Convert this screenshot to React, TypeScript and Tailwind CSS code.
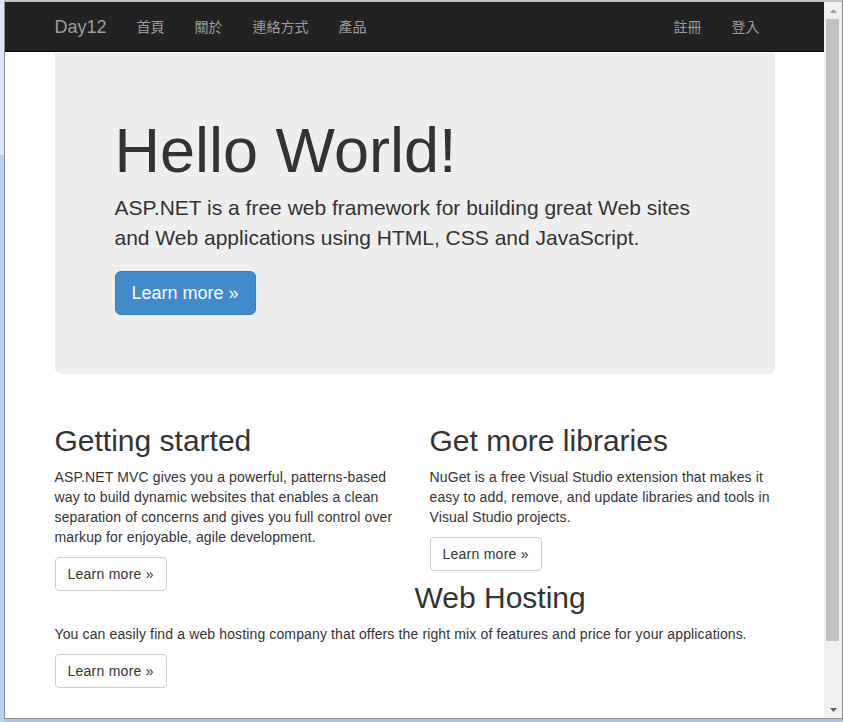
import React from 'react';

const leftNav = ['首頁', '關於', '連絡方式', '產品'];
const rightNav = ['註冊', '登入'];

const columns = [
  {
    title: 'Getting started',
    text: 'ASP.NET MVC gives you a powerful, patterns-based way to build dynamic websites that enables a clean separation of concerns and gives you full control over markup for enjoyable, agile development.',
  },
  {
    title: 'Get more libraries',
    text: 'NuGet is a free Visual Studio extension that makes it easy to add, remove, and update libraries and tools in Visual Studio projects.',
  },
];

const DefaultButton = () => (
  <div className="flex">
    <a className="border border-[#ccc] rounded-[4px] px-[12px] py-[6px] text-[14px] leading-[20px] tracking-[0.25px] text-[#333] bg-white cursor-pointer">
      Learn more &raquo;
    </a>
  </div>
);

const Scrollbar = () => (
  <div className="w-[18px] shrink-0 bg-[#f0f0f0] flex flex-col">
    <div className="h-[17px] flex items-center justify-center">
      <svg width="7" height="4" viewBox="0 0 7 4">
        <path d="M0 4 L3.5 0 L7 4 Z" fill="#a3a3a3" />
      </svg>
    </div>
    <div className="ml-[2px] w-[13px] h-[622px] bg-[#c1c1c1]" />
    <div className="flex-1" />
    <div className="h-[17px] flex items-center justify-center">
      <svg width="7" height="4" viewBox="0 0 7 4">
        <path d="M0 0 L7 0 L3.5 4 Z" fill="#606060" />
      </svg>
    </div>
  </div>
);

export default function App() {
  return (
    <div className="w-[843px] h-[722px] overflow-hidden flex bg-[#b3c4d6] font-['Liberation_Sans','Noto_Sans_CJK_TC',sans-serif]">
      {/* desktop behind the window */}
      <div className="w-[4px] h-[722px] shrink-0 flex flex-col">
        <div className="h-[155px] bg-[#dce8f6]" />
        <div className="flex-1 bg-[#b5d3f5]" />
      </div>

      {/* browser window */}
      <div className="w-[839px] h-[719px] shrink-0 flex bg-white border-l border-r border-b border-[#8f8f8f] border-t-2 border-t-[#c4c4c4]">
        <div className="flex-1 overflow-hidden">
          {/* navbar */}
          <nav className="h-[50px] bg-[#222] border-b border-[#080808]">
            <div className="w-[750px] h-full mx-auto px-[15px] flex justify-between">
              <div className="flex items-center h-full">
                <a className="pr-[15px] text-[18px] leading-[20px] text-[#9d9d9d]">Day12</a>
                {leftNav.map(item => (
                  <a key={item} className="px-[15px] text-[14px] leading-[20px] text-[#9d9d9d]">
                    {item}
                  </a>
                ))}
              </div>
              <div className="flex items-center h-full">
                {rightNav.map(item => (
                  <a key={item} className="px-[15px] text-[14px] leading-[20px] text-[#9d9d9d]">
                    {item}
                  </a>
                ))}
              </div>
            </div>
          </nav>

          <div className="w-[750px] mx-auto px-[15px] text-[#333]">
            {/* jumbotron */}
            <div className="mt-[1px] mb-[30px] bg-[#eee] rounded-b-[6px] pt-[63px] pb-[59px] px-[60px]">
              <h1 className="text-[63px] leading-[1.1] mb-[8px]">Hello World!</h1>
              <p className="text-[21px] leading-[1.4]">
                ASP.NET is a free web framework for building great Web sites and Web applications using HTML, CSS and JavaScript.
              </p>
              <div className="mt-[19px] flex">
                <a className="bg-[#428bca] border border-[#357ebd] text-white text-[18px] leading-[24px] px-[16px] py-[9px] rounded-[6px] cursor-pointer">
                  Learn more &raquo;
                </a>
              </div>
            </div>

            {/* two columns */}
            <div className="grid grid-cols-2 gap-x-[30px]">
              {columns.map(col => (
                <div key={col.title}>
                  <h2 className="text-[30px] leading-[1.1] mt-[20px] mb-[10px]">{col.title}</h2>
                  <p className="text-[14px] leading-[20px] tracking-[0.13px] mb-[10px]">{col.text}</p>
                  <DefaultButton />
                </div>
              ))}
            </div>

            {/* web hosting */}
            <div>
              <h2 className="text-[30px] leading-[1.1] -mt-[10px] mb-[10px] ml-[360px]">Web Hosting</h2>
              <p className="text-[14px] leading-[20px] tracking-[0.13px] mb-[10px]">
                You can easily find a web hosting company that offers the right mix of features and price for your applications.
              </p>
              <DefaultButton />
            </div>
          </div>
        </div>
        <Scrollbar />
      </div>
    </div>
  );
}
